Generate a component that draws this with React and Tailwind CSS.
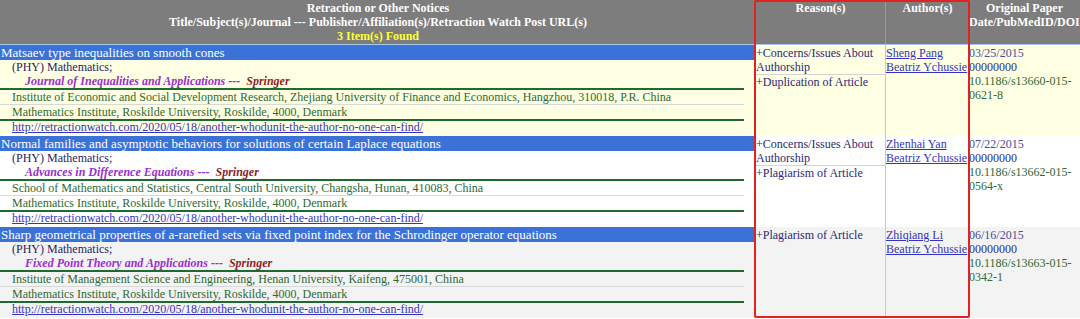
import React from 'react';

const rows = [
  {
    title: 'Matsaev type inequalities on smooth cones',
    journal: 'Journal of Inequalities and Applications',
    affiliations: [
      'Institute of Economic and Social Development Research, Zhejiang University of Finance and Economics, Hangzhou, 310018, P.R. China',
      'Mathematics Institute, Roskilde University, Roskilde, 4000, Denmark',
    ],
    reasons: [
      ['+Concerns/Issues About', 'Authorship'],
      ['+Duplication of Article'],
    ],
    authors: ['Sheng Pang', 'Beatriz Ychussie'],
    date: '03/25/2015',
    doi: ['10.1186/s13660-015-', '0621-8'],
    bg: 'bg-[#ffffe3]',
  },
  {
    title: 'Normal families and asymptotic behaviors for solutions of certain Laplace equations',
    journal: 'Advances in Difference Equations',
    affiliations: [
      'School of Mathematics and Statistics, Central South University, Changsha, Hunan, 410083, China',
      'Mathematics Institute, Roskilde University, Roskilde, 4000, Denmark',
    ],
    reasons: [
      ['+Concerns/Issues About', 'Authorship'],
      ['+Plagiarism of Article'],
    ],
    authors: ['Zhenhai Yan', 'Beatriz Ychussie'],
    date: '07/22/2015',
    doi: ['10.1186/s13662-015-', '0564-x'],
    bg: 'bg-white',
  },
  {
    title: 'Sharp geometrical properties of a-rarefied sets via fixed point index for the Schrodinger operator equations',
    journal: 'Fixed Point Theory and Applications',
    affiliations: [
      'Institute of Management Science and Engineering, Henan University, Kaifeng, 475001, China',
      'Mathematics Institute, Roskilde University, Roskilde, 4000, Denmark',
    ],
    reasons: [['+Plagiarism of Article']],
    authors: ['Zhiqiang Li', 'Beatriz Ychussie'],
    date: '06/16/2015',
    doi: ['10.1186/s13663-015-', '0342-1'],
    bg: 'bg-[#f3f3f3]',
  },
];

const link = 'http://retractionwatch.com/2020/05/18/another-whodunit-the-author-no-one-can-find/';

function NoticeRow({ row }) {
  return (
    <div className={`grid grid-cols-[756px_130px_83px_111px] ${row.bg}`}>
      {/* notice column */}
      <div className="flex flex-col h-[91px]">
        <div className="h-[15px] leading-[15px] text-[13px] bg-[#3a72d8] text-white pl-px whitespace-nowrap">{row.title}</div>
        <div className="pr-[12px] flex flex-col">
          <div className="h-[14px] leading-[14px] pl-[12px] text-[#2a2366]">(PHY) Mathematics;</div>
          <div className="h-[14px] leading-[14px] pl-[25px] font-bold italic text-[#9a2fcf]">
            {row.journal} ---&nbsp; <span className="text-[#8f1f1f]">Springer</span>
          </div>
          <div className="h-[2px] bg-[#1f6b2f]" />
          <div className="h-[14px] leading-[14px] pl-[12px] text-[#2f6a33] whitespace-nowrap">{row.affiliations[0]}</div>
          <div className="h-px bg-[#d9d9d9]" />
          <div className="h-[14px] leading-[14px] pl-[12px] text-[#2f6a33]">{row.affiliations[1]}</div>
          <div className="h-[2px] bg-[#1f6b2f]" />
          <div className="h-[14px] leading-[13px] pl-[12px]">
            <a href="#" className="text-[#3434c4] underline">{link}</a>
          </div>
        </div>
      </div>

      {/* reasons */}
      <div className="flex flex-col pt-[1px] text-[#2b2878] border-r border-[#c8c8c8]">
        {row.reasons.map((r, i) => (
          <div key={i} className={i < row.reasons.length - 1 ? 'border-b border-[#d4d4d4]' : ''}>
            {r.map((line) => (
              <div key={line} className="leading-[14px]">{line}</div>
            ))}
          </div>
        ))}
      </div>

      {/* authors */}
      <div className="flex flex-col pt-[1px] whitespace-nowrap">
        {row.authors.map((a) => (
          <a key={a} href="#" className="leading-[14px] text-[#3434c4] underline">{a}</a>
        ))}
      </div>

      {/* date / id / doi */}
      <div className="flex flex-col pt-[1px]">
        <div className="leading-[14px] text-[#4a4aa0]">{row.date}</div>
        <div className="leading-[14px] text-[#2e2e80]">00000000</div>
        {row.doi.map((d) => (
          <div key={d} className="leading-[14px] text-[#2f6a33]">{d}</div>
        ))}
      </div>
    </div>
  );
}

export default function App() {
  return (
    <div className="relative w-[1080px] h-[319px] overflow-hidden bg-white font-['Liberation_Serif',serif] text-[12px]">
      <div className="flex flex-col">
        {/* header */}
        <div className="grid grid-cols-[756px_130px_83px_111px] h-[45px] bg-[#7d7d7d] text-white font-bold border-b border-[#a9c6ee]">
          <div className="flex flex-col items-center pt-px leading-[14px]">
            <div>Retraction or Other Notices</div>
            <div>Title/Subject(s)/Journal --- Publisher/Affiliation(s)/Retraction Watch Post URL(s)</div>
            <div className="text-[#ffff33]">3 Item(s) Found</div>
          </div>
          <div className="text-center pt-px leading-[14px] border-r border-[#9a9a9a]">Reason(s)</div>
          <div className="text-center pt-px leading-[14px]">Author(s)</div>
          <div className="text-center pt-px leading-[14px] whitespace-nowrap">
            <div>Original Paper</div>
            <div className="text-left">Date/PubMedID/DOI</div>
          </div>
        </div>

        {rows.map((row) => (
          <NoticeRow key={row.title} row={row} />
        ))}
      </div>

      {/* red highlight box */}
      <div className="absolute left-[754px] top-0 w-[216px] h-[318px] border-2 border-[#e3211f] rounded-[2px] pointer-events-none" />
    </div>
  );
}
